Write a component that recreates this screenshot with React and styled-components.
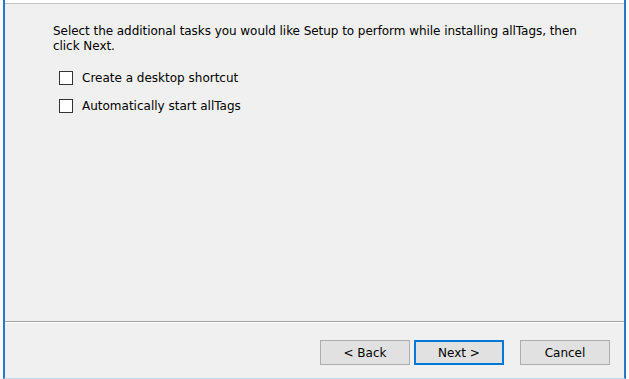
import React from "react";
import styled, { createGlobalStyle } from "styled-components";

const Global = createGlobalStyle`
  html, body { margin: 0; padding: 0; background: #ffffff; }
  * { box-sizing: border-box; }
`;

const Screen = styled.div`
  width: 629px;
  height: 379px;
  padding: 0 3px 0 3px;
  background: #fbfbfb;
`;

const Wizard = styled.div`
  height: 379px;
  display: flex;
  flex-direction: column;
  border-left: 2px solid #2a78c4;
  border-right: 2px solid #2a78c4;
  border-bottom: 1px solid #bfdaf2;
  background: #f0f0f0;
  font-family: Tahoma, "DejaVu Sans", "Liberation Sans", sans-serif;
  font-size: 12px;
  color: #000;
`;

const HeaderEdge = styled.div`
  height: 4px;
  background: #ffffff;
  border-bottom: 1px solid #c4c4c4;
`;

const Content = styled.div`
  flex: 1;
  padding: 20px 30px 0 48px;
`;

const Intro = styled.p`
  margin: 0 0 17px 0;
  line-height: 15px;
  letter-spacing: -0.05px;
`;

const TaskList = styled.div`
  display: flex;
  flex-direction: column;
  gap: 14px;
  padding-left: 6px;
`;

const Task = styled.label`
  display: flex;
  align-items: center;
  gap: 9px;
  height: 14px;
`;

const Box = styled.span`
  width: 14px;
  height: 14px;
  border: 1px solid #333333;
  background: #ffffff;
  flex: none;
`;

const Separator = styled.div`
  height: 2px;
  border-top: 1px solid #a0a0a0;
  border-bottom: 1px solid #ffffff;
`;

const Footer = styled.div`
  height: 55px;
  display: flex;
  justify-content: flex-end;
  align-items: flex-start;
  padding: 17px 14px 0 0;
`;

const Button = styled.div`
  width: 90px;
  height: 25px;
  margin-left: ${(p) => p.$ml || 0}px;
  display: flex;
  align-items: center;
  justify-content: center;
  background: #e1e1e1;
  border: ${(p) => (p.$default ? "2px solid #0078d7" : "1px solid #adadad")};
  font-size: 12px;
`;

export default function App() {
  return (
    <>
      <Global />
      <Screen>
        <Wizard>
          <HeaderEdge />
          <Content>
            <Intro>
              Select the additional tasks you would like Setup to perform while installing allTags, then
              <br />
              click Next.
            </Intro>
            <TaskList>
              <Task>
                <Box />
                Create a desktop shortcut
              </Task>
              <Task>
                <Box />
                Automatically start allTags
              </Task>
            </TaskList>
          </Content>
          <Separator />
          <Footer>
            <Button>&lt; Back</Button>
            <Button $default $ml={4}>Next &gt;</Button>
            <Button $ml={16}>Cancel</Button>
          </Footer>
        </Wizard>
      </Screen>
    </>
  );
}
